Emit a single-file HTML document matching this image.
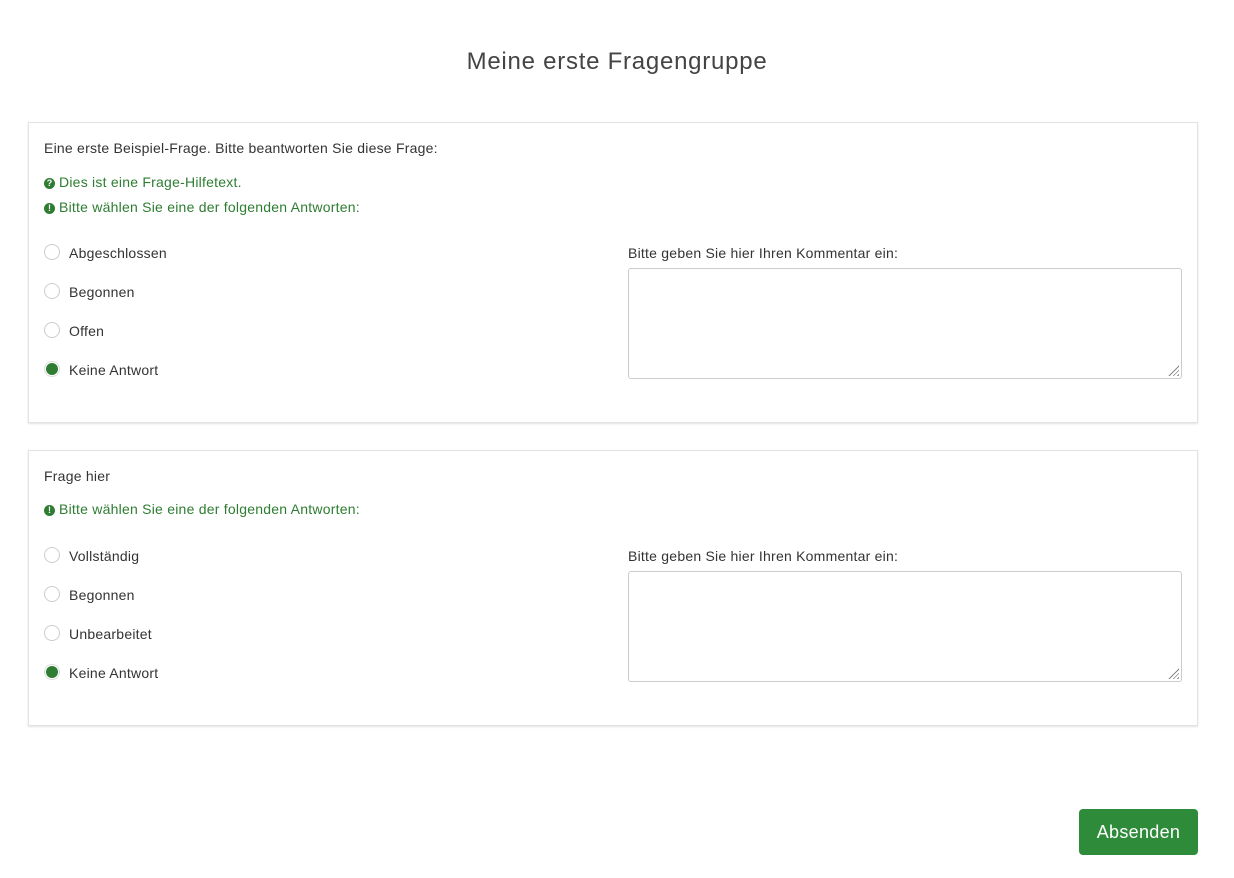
<!DOCTYPE html>
<html><head><meta charset="utf-8"><style>
body{margin:0;width:1234px;height:878px;background:#fff;font-family:"Liberation Sans",sans-serif;color:#333;font-size:14px;letter-spacing:0.23px;position:relative;overflow:hidden}
.a{position:absolute;white-space:nowrap}
.panel{position:absolute;left:28px;width:1168px;border:1px solid #e3e3e3;box-shadow:0 1px 2px rgba(0,0,0,.12);background:#fff}
.g{color:#2e7d32}
.r{position:absolute;left:44px;width:16px;height:16px;border:1px solid #ccc;border-radius:50%;box-sizing:border-box}
.r.on{border-color:#ddd}
.r.on::after{content:"";position:absolute;left:1px;top:1px;width:12px;height:12px;border-radius:50%;background:#2e7d32}
.ic{display:inline-block;width:11px;height:11px;border-radius:50%;background:#2e7d32;color:#fff;font-size:9px;font-weight:bold;text-align:center;line-height:11px;vertical-align:1px;margin-right:4px;letter-spacing:0}
.ta{position:absolute;left:628px;width:554px;height:111px;border:1px solid #ccc;border-radius:3px;box-sizing:border-box}
.ta::after{content:"";position:absolute;right:2px;bottom:2px;width:11px;height:11px;background:repeating-linear-gradient(135deg,transparent 0 2px,#888 2px 3px);clip-path:polygon(100% 0,100% 100%,0 100%)}
</style></head><body>
<div class="a" style="left:0;width:1234px;text-align:center;top:48px;font-size:24px;letter-spacing:0.75px;color:#444">Meine erste Fragengruppe</div>
<div class="panel" style="top:122px;height:299px"></div>
<div class="panel" style="top:450px;height:274px"></div>

<div class="a" style="left:44px;top:140px">Eine erste Beispiel-Frage. Bitte beantworten Sie diese Frage:</div>
<div class="a g" style="left:44px;top:174px"><span class="ic">?</span>Dies ist eine Frage-Hilfetext.</div>
<div class="a g" style="left:44px;top:199px"><span class="ic">!</span>Bitte wählen Sie eine der folgenden Antworten:</div>
<div class="r" style="top:244px"></div><div class="a" style="left:69px;top:245px">Abgeschlossen</div>
<div class="r" style="top:283px"></div><div class="a" style="left:69px;top:284px">Begonnen</div>
<div class="r" style="top:322px"></div><div class="a" style="left:69px;top:323px">Offen</div>
<div class="r on" style="top:361px"></div><div class="a" style="left:69px;top:362px">Keine Antwort</div>
<div class="a" style="left:628px;top:245px">Bitte geben Sie hier Ihren Kommentar ein:</div>
<div class="ta" style="top:268px"></div>

<div class="a" style="left:44px;top:468px">Frage hier</div>
<div class="a g" style="left:44px;top:501px"><span class="ic">!</span>Bitte wählen Sie eine der folgenden Antworten:</div>
<div class="r" style="top:547px"></div><div class="a" style="left:69px;top:548px">Vollständig</div>
<div class="r" style="top:586px"></div><div class="a" style="left:69px;top:587px">Begonnen</div>
<div class="r" style="top:625px"></div><div class="a" style="left:69px;top:626px">Unbearbeitet</div>
<div class="r on" style="top:664px"></div><div class="a" style="left:69px;top:665px">Keine Antwort</div>
<div class="a" style="left:628px;top:548px">Bitte geben Sie hier Ihren Kommentar ein:</div>
<div class="ta" style="top:571px"></div>

<div class="a" style="left:1079px;top:809px;width:119px;height:46px;background:#2e8b3a;border-radius:4px;color:#fff;font-size:18px;letter-spacing:0.3px;text-align:center;line-height:46px">Absenden</div>
</body></html>
